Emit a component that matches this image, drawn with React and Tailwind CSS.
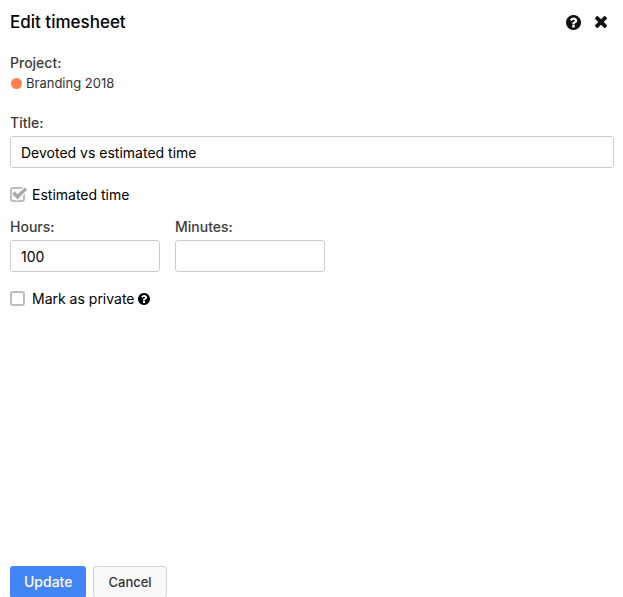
import { useState } from 'react';

const QuestionIcon = ({ className }) => (
  <svg viewBox="128 128 1536 1536" fill="currentColor" className={className} aria-hidden="true">
    <path d="M1024 1376v-192q0-14-9-23t-23-9h-192q-14 0-23 9t-9 23v192q0 14 9 23t23 9h192q14 0 23-9t9-23zm256-672q0-88-55.5-163t-138.5-116-170-41q-243 0-371 213-15 24 8 42l132 100q7 6 19 6 16 0 25-12 53-68 86-92 34-24 86-24 48 0 85.5 26t37.5 59q0 38-20 61t-68 45q-63 28-115.5 86.5t-52.5 125.5v36q0 14 9 23t23 9h192q14 0 23-9t9-23q0-19 21.5-49.5t54.5-49.5q32-18 49-28.5t46-35 44.5-48 28-60.5 12.5-81zm384 192q0 209-103 385.5t-279.5 279.5-385.5 103-385.5-103-279.5-279.5-103-385.5 103-385.5 279.5-279.5 385.5-103 385.5 103 279.5 279.5 103 385.5z" />
  </svg>
);

const CloseIcon = ({ className }) => (
  <svg viewBox="302 366 1188 1188" fill="currentColor" className={className} aria-hidden="true">
    <path d="M1490 1322q0 40-28 68l-136 136q-28 28-68 28t-68-28l-294-294-294 294q-28 28-68 28t-68-28l-136-136q-28-28-28-68t28-68l294-294-294-294q-28-28-28-68t28-68l136-136q28-28 68-28t68 28l294 294 294-294q28-28 68-28t68 28l136 136q28 28 28 68t-28 68l-294 294 294 294q28 28 28 68z" />
  </svg>
);

const Field = ({ id, label, value, onChange, className }) => (
  <div className={className}>
    <label htmlFor={id} className="block text-sm font-medium text-[#3c3c3c]">
      {label}
    </label>
    <input
      id={id}
      type="text"
      value={value}
      onChange={(e) => onChange(e.target.value)}
      className="mt-[3px] block h-8 w-full rounded-[3px] border border-[#ccc] bg-white px-2.5 text-sm text-black outline-none"
    />
  </div>
);

const Checkbox = ({ id, label, checked, onChange }) => (
  <div className="flex items-center">
    <div className="relative mr-1 h-4 w-[18px]">
      <input
        id={id}
        type="checkbox"
        checked={checked}
        onChange={(e) => onChange(e.target.checked)}
        className="block size-[15px] appearance-none rounded-[3px] border-2 border-[#bdbdbd] bg-white"
      />
      {checked && (
        <svg viewBox="0 0 18 16" className="pointer-events-none absolute inset-0 h-4 w-[18px]" aria-hidden="true">
          <path d="M3.4 5.5L7.5 9.8L16 1.6" fill="none" stroke="#fff" strokeWidth="6" />
          <path d="M3.4 5.5L7.5 9.8L16 1.6" fill="none" stroke="#a9a9a9" strokeWidth="3.4" />
        </svg>
      )}
    </div>
    <label htmlFor={id} className="text-sm text-black">
      {label}
    </label>
  </div>
);

const App = () => {
  const [title, setTitle] = useState('Devoted vs estimated time');
  const [hours, setHours] = useState('100');
  const [minutes, setMinutes] = useState('');
  const [estimated, setEstimated] = useState(true);
  const [isPrivate, setIsPrivate] = useState(false);

  return (
    <form
      onSubmit={(e) => e.preventDefault()}
      className="flex h-screen flex-col overflow-hidden bg-white pr-[9px] pl-2.5 font-['Inter',sans-serif]"
    >
      <header className="flex items-center justify-between pt-2">
        <h1 className="text-[17px] leading-7 font-medium text-black">Edit timesheet</h1>
        <div className="flex items-center gap-3 pr-[5px] text-[#111]">
          <button type="button" aria-label="Help">
            <QuestionIcon className="size-[15px]" />
          </button>
          <button type="button" aria-label="Close" className="px-0.5">
            <CloseIcon className="size-3" />
          </button>
        </div>
      </header>

      <main className="flex-1 pt-[17px]">
        <h2 className="text-sm font-medium text-[#3c3c3c]">Project:</h2>
        <p className="flex items-center gap-1 pl-px text-[13px] leading-5 text-[#333]">
          <span className="size-[11px] rounded-full bg-[#ff7f50]" />
          Branding 2018
        </p>

        <Field id="title" label="Title:" value={title} onChange={setTitle} className="mt-5" />

        <div className="mt-[17px]">
          <Checkbox id="estimated" label="Estimated time" checked={estimated} onChange={setEstimated} />
        </div>

        <div className="mt-3 flex gap-[15px]">
          <Field id="hours" label="Hours:" value={hours} onChange={setHours} className="w-[150px]" />
          <Field id="minutes" label="Minutes:" value={minutes} onChange={setMinutes} className="w-[150px]" />
        </div>

        <div className="mt-[17px] flex items-center gap-[3px]">
          <Checkbox id="private" label="Mark as private" checked={isPrivate} onChange={setIsPrivate} />
          <button type="button" aria-label="About private timesheets">
            <QuestionIcon className="size-3" />
          </button>
        </div>
      </main>

      <footer className="flex h-[31px] shrink-0 items-start gap-[7px]">
        <button type="submit" className="h-8 rounded-[3px] bg-[#4285f4] px-3.5 text-sm font-medium text-white">
          Update
        </button>
        <button
          type="button"
          className="h-8 rounded-[3px] border border-[#d3d3d3] bg-[#f9f9f9] px-3.5 pt-0.5 text-[13px] font-medium text-[#333]"
        >
          Cancel
        </button>
      </footer>
    </form>
  );
};

export default App;
